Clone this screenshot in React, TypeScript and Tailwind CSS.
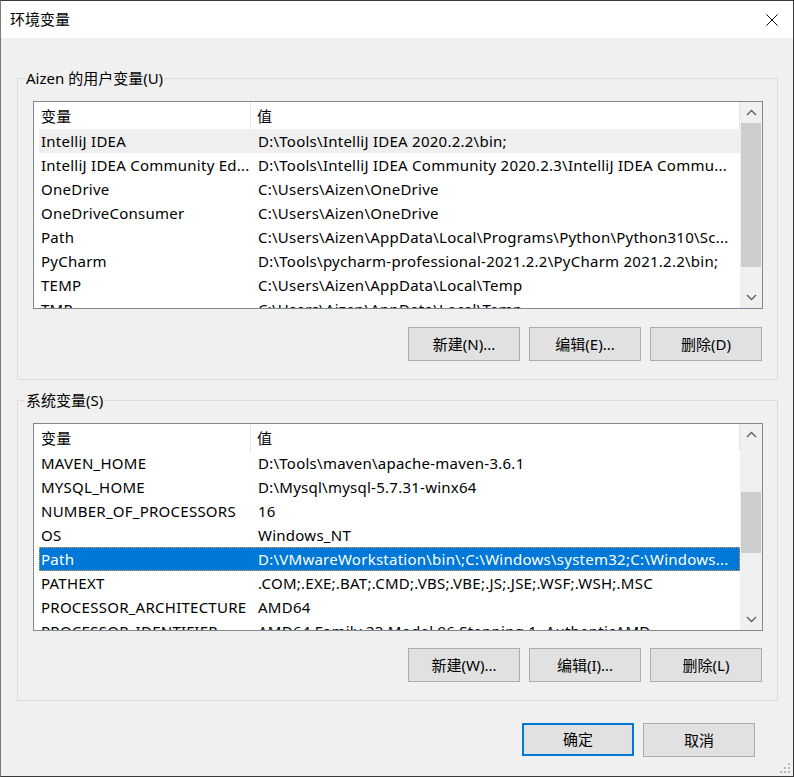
import React from 'react';

interface EnvVar {
  name: string;
  value: string;
}

const userVars: EnvVar[] = [
  { name: 'IntelliJ IDEA', value: 'D:\\Tools\\IntelliJ IDEA 2020.2.2\\bin;' },
  { name: 'IntelliJ IDEA Community Ed...', value: 'D:\\Tools\\IntelliJ IDEA Community 2020.2.3\\IntelliJ IDEA Commu...' },
  { name: 'OneDrive', value: 'C:\\Users\\Aizen\\OneDrive' },
  { name: 'OneDriveConsumer', value: 'C:\\Users\\Aizen\\OneDrive' },
  { name: 'Path', value: 'C:\\Users\\Aizen\\AppData\\Local\\Programs\\Python\\Python310\\Sc...' },
  { name: 'PyCharm', value: 'D:\\Tools\\pycharm-professional-2021.2.2\\PyCharm 2021.2.2\\bin;' },
  { name: 'TEMP', value: 'C:\\Users\\Aizen\\AppData\\Local\\Temp' },
  { name: 'TMP', value: 'C:\\Users\\Aizen\\AppData\\Local\\Temp' },
];

const systemVars: EnvVar[] = [
  { name: 'MAVEN_HOME', value: 'D:\\Tools\\maven\\apache-maven-3.6.1' },
  { name: 'MYSQL_HOME', value: 'D:\\Mysql\\mysql-5.7.31-winx64' },
  { name: 'NUMBER_OF_PROCESSORS', value: '16' },
  { name: 'OS', value: 'Windows_NT' },
  { name: 'Path', value: 'D:\\VMwareWorkstation\\bin\\;C:\\Windows\\system32;C:\\Windows...' },
  { name: 'PATHEXT', value: '.COM;.EXE;.BAT;.CMD;.VBS;.VBE;.JS;.JSE;.WSF;.WSH;.MSC' },
  { name: 'PROCESSOR_ARCHITECTURE', value: 'AMD64' },
  { name: 'PROCESSOR_IDENTIFIER', value: 'AMD64 Family 23 Model 96 Stepping 1, AuthenticAMD' },
];

const Chevron = ({ up }: { up: boolean }) => (
  <svg width="11" height="7" viewBox="0 0 11 7">
    <polyline
      points={up ? '1,6 5.5,1.5 10,6' : '1,1 5.5,5.5 10,1'}
      fill="none"
      stroke="#606060"
      strokeWidth="1.4"
    />
  </svg>
);

const VarList = ({
  vars,
  hovered,
  selected,
  thumbTop,
  thumbHeight,
}: {
  vars: EnvVar[];
  hovered?: number;
  selected?: number;
  thumbTop: string;
  thumbHeight: string;
}) => (
  <div className="w-[730px] h-[208px] border border-[#828790] bg-white flex overflow-hidden">
    <div className="w-[706px] pl-[5px] overflow-hidden tracking-[0.25px]">
      {/* header */}
      <div className="h-[27px] flex items-center">
        <div className="w-[212px] h-full pl-[2px] pt-[2px] flex items-center border-r border-[#e5e5e5]">变量</div>
        <div className="flex-1 h-full pl-[6px] pt-[2px] flex items-center border-r border-[#e5e5e5]">值</div>
      </div>
      {vars.map((v, i) => (
        <div
          key={v.name + i}
          className={
            i === selected
              ? 'h-[24px] flex items-center bg-[#0078d7] text-white outline-1 outline-dotted outline-[#f0a040] -outline-offset-1'
              : i === hovered
              ? 'h-[24px] flex items-center bg-[#efefef]'
              : 'h-[24px] flex items-center'
          }
        >
          <div className="w-[212px] pl-[2px] whitespace-nowrap overflow-hidden">{v.name}</div>
          <div className="flex-1 pl-[7px] whitespace-nowrap overflow-hidden">{v.value}</div>
        </div>
      ))}
    </div>
    {/* scrollbar */}
    <div className="w-[22px] bg-[#f0f0f0] flex flex-col items-center">
      <div className="h-[21px] flex items-center justify-center">
        <Chevron up />
      </div>
      <div className="flex-1 w-full flex flex-col">
        <div className={thumbTop} />
        <div className={`${thumbHeight} mx-[1px] bg-[#cdcdcd]`} />
      </div>
      <div className="h-[21px] flex items-center justify-center">
        <Chevron up={false} />
      </div>
    </div>
  </div>
);

const WinButton = ({ label, primary }: { label: string; primary?: boolean }) => (
  <button
    className={
      primary
        ? 'w-[112px] h-[33px] bg-[#e1e1e1] border-2 border-[#0078d7] text-[15px]'
        : 'w-[112px] h-[34px] bg-[#e1e1e1] border border-[#adadad] text-[15px]'
    }
  >
    {label}
  </button>
);

const GroupBox = ({ title, children }: { title: string; children: React.ReactNode }) => (
  <fieldset className="w-[761px] border border-[#dcdcdc] p-0 m-0">
    <legend className="ml-[7px] px-[1px] leading-[20px]">{title}</legend>
    <div className="pt-[13px] pl-[15px] pb-[18px]">{children}</div>
  </fieldset>
);

const App = () => {
  return (
    <div
      className="w-[794px] h-[777px] bg-[#f0f0f0] border border-[#3a3a3a] border-l-[#7a7a7a] flex flex-col text-[15px] text-black relative"
      style={{ fontFamily: '"Noto Sans", "Noto Sans CJK SC", sans-serif' }}
    >
      {/* title bar */}
      <div className="h-[37px] bg-white flex items-center justify-between pl-[9px] pr-[15px] shrink-0">
        <span>环境变量</span>
        <svg width="12" height="12" viewBox="0 0 12 12">
          <path d="M0.5 0.5 L11.5 11.5 M11.5 0.5 L0.5 11.5" stroke="#111" strokeWidth="1" />
        </svg>
      </div>

      <div className="pt-[30px] pl-[16px] flex flex-col">
        <GroupBox title="Aizen 的用户变量(U)">
          <VarList vars={userVars} hovered={0} thumbTop="h-0" thumbHeight="h-[144px]" />
          <div className="w-[729px] flex justify-end gap-[9px] mt-[18px]">
            <WinButton label="新建(N)..." />
            <WinButton label="编辑(E)..." />
            <WinButton label="删除(D)" />
          </div>
        </GroupBox>

        <div className="h-[10px]" />

        <GroupBox title="系统变量(S)">
          <VarList vars={systemVars} selected={4} thumbTop="h-[47px]" thumbHeight="h-[61px]" />
          <div className="w-[729px] flex justify-end gap-[9px] mt-[17px]">
            <WinButton label="新建(W)..." />
            <WinButton label="编辑(I)..." />
            <WinButton label="删除(L)" />
          </div>
        </GroupBox>
      </div>

      <div className="flex justify-end gap-[9px] pr-[38px] mt-[22px]">
        <WinButton label="确定" primary />
        <WinButton label="取消" />
      </div>

      {/* resize grip */}
      <svg className="absolute right-[2px] bottom-[2px]" width="12" height="12" viewBox="0 0 12 12">
        <rect x="9" y="1" width="2" height="2" fill="#b8b8b8" />
        <rect x="5" y="5" width="2" height="2" fill="#b8b8b8" />
        <rect x="9" y="5" width="2" height="2" fill="#b8b8b8" />
        <rect x="1" y="9" width="2" height="2" fill="#b8b8b8" />
        <rect x="5" y="9" width="2" height="2" fill="#b8b8b8" />
        <rect x="9" y="9" width="2" height="2" fill="#b8b8b8" />
      </svg>
    </div>
  );
};

export default App;
